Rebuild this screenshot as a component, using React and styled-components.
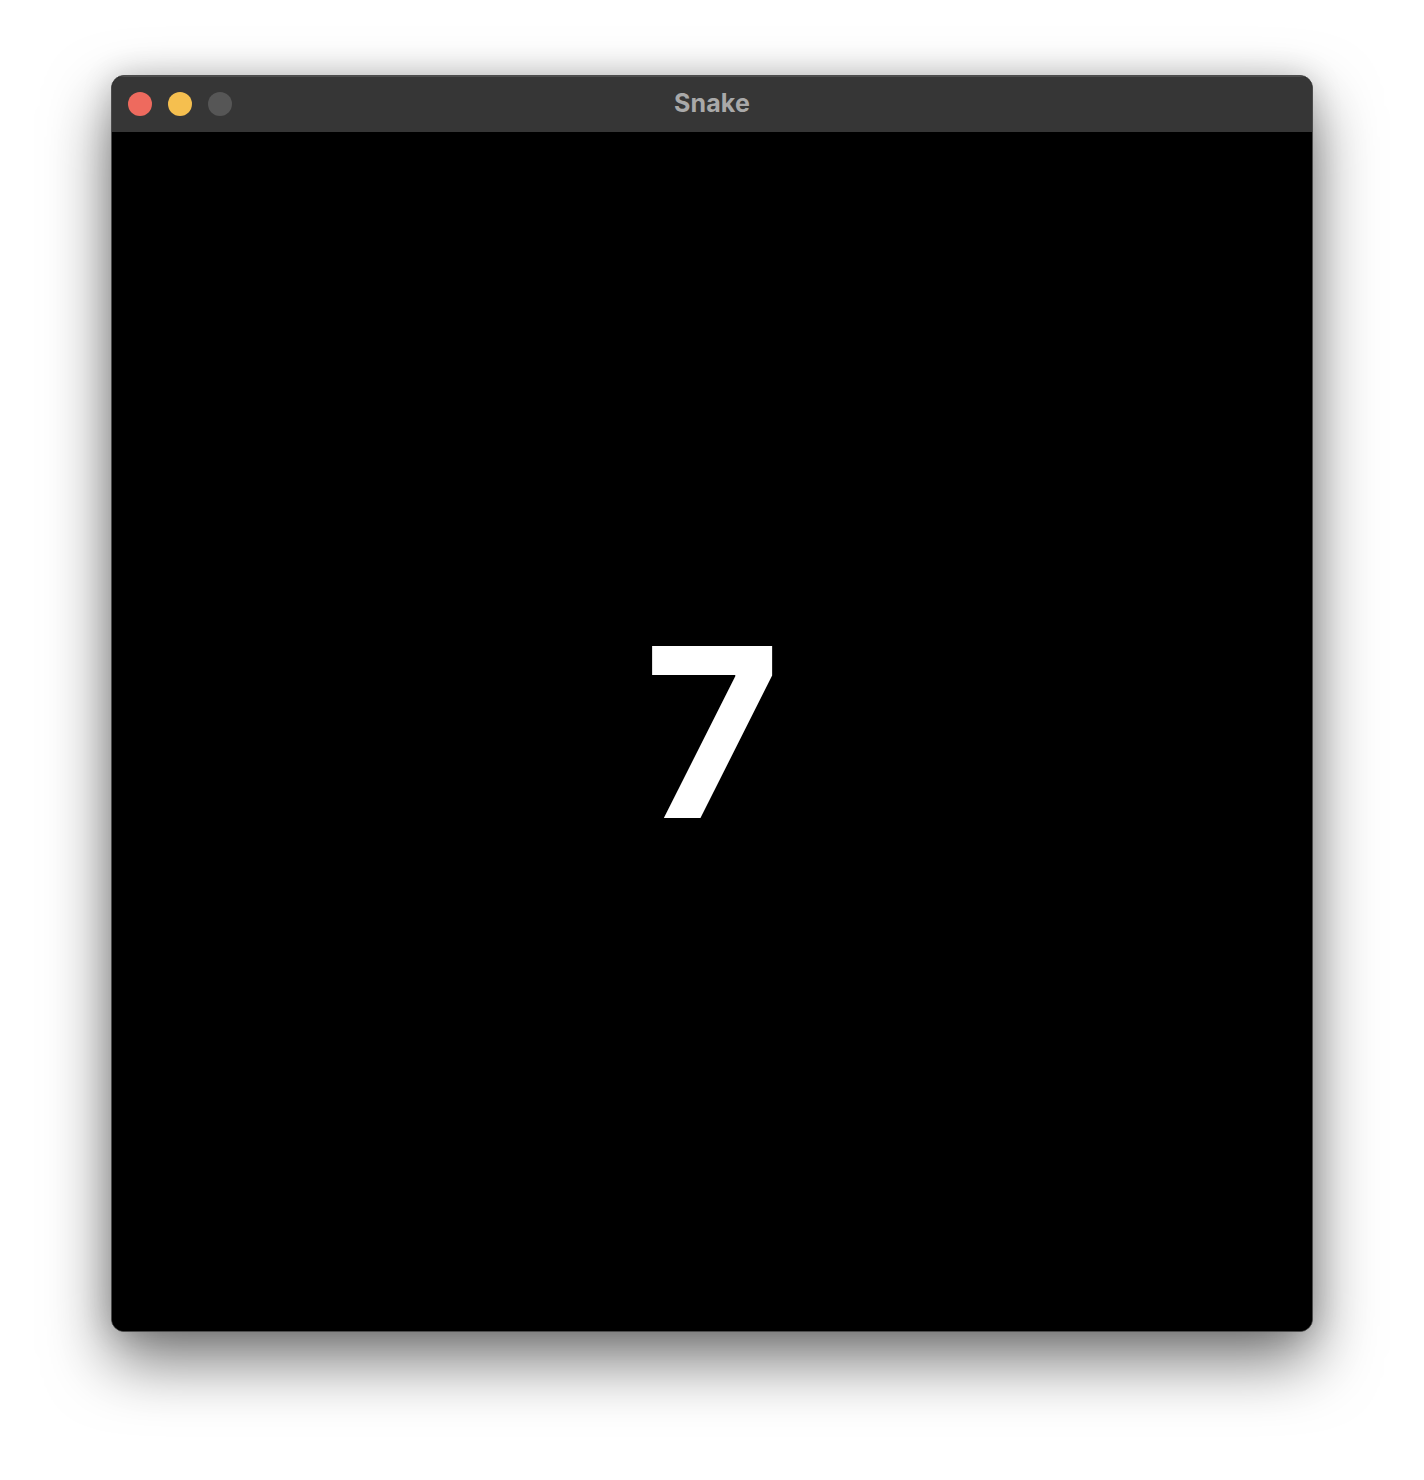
import React from "react";
import styled, { createGlobalStyle } from "styled-components";

const Global = createGlobalStyle`
  html, body { margin: 0; padding: 0; background: #ffffff; }
  body { font-family: Inter, "Liberation Sans", sans-serif; }
`;

const Page = styled.div`
  width: 1424px;
  height: 1480px;
  padding: 75px 0 0 111px;
  box-sizing: border-box;
  display: flex;
  justify-content: flex-start;
  align-items: flex-start;
  background: #ffffff;
`;

const Window = styled.div`
  width: 1202px;
  height: 1257px;
  box-sizing: border-box;
  border: 1px solid #4c4c4c;
  border-radius: 13px;
  overflow: hidden;
  display: flex;
  flex-direction: column;
  background: #000;
  box-shadow: 0 28px 64px rgba(0, 0, 0, 0.55), 0 0 30px rgba(0, 0, 0, 0.16);
`;

const TitleBar = styled.div`
  position: relative;
  height: 56px;
  flex: 0 0 56px;
  background: #363636;
  box-shadow: inset 0 1px 0 rgba(255, 255, 255, 0.12);
  display: flex;
  align-items: center;
  justify-content: center;
`;

const Lights = styled.div`
  position: absolute;
  left: 16px;
  top: 16px;
  display: flex;
  gap: 16px;
`;

const Light = styled.span`
  width: 24px;
  height: 24px;
  border-radius: 50%;
  background: ${(p) => p.$color};
`;

const Title = styled.div`
  color: #a9a9a9;
  font-family: Inter, "Liberation Sans", sans-serif;
  font-weight: 700;
  font-size: 25px;
  letter-spacing: 0.1px;
  margin-top: -3px;
`;

const Content = styled.div`
  flex: 1;
  background: #000;
  display: flex;
  align-items: center;
  justify-content: center;
`;

const Count = styled.div`
  color: #ffffff;
  font-family: Inter, "Liberation Sans", sans-serif;
  font-weight: 700;
  font-size: 236px;
  line-height: 1;
  margin-top: 0px;
`;

export default function App() {
  return (
    <>
      <Global />
      <Page>
        <Window>
          <TitleBar>
            <Lights>
              <Light $color="#ee6a5e" />
              <Light $color="#f5bf4f" />
              <Light $color="#565656" />
            </Lights>
            <Title>Snake</Title>
          </TitleBar>
          <Content>
            <Count>7</Count>
          </Content>
        </Window>
      </Page>
    </>
  );
}
